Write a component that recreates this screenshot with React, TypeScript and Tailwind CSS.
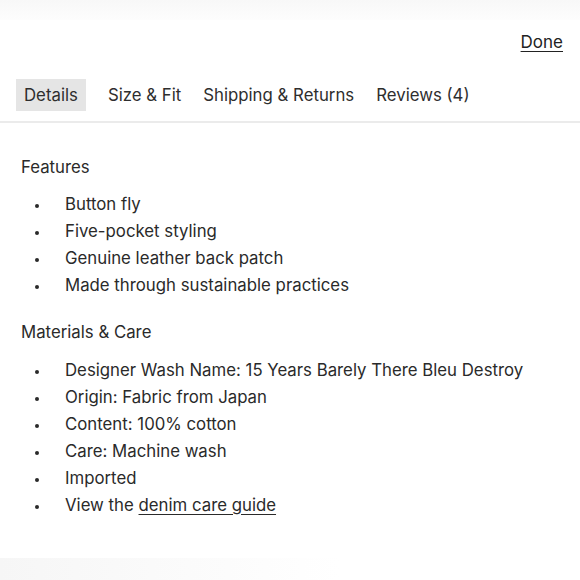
import React from "react";

const features = [
  "Button fly",
  "Five-pocket styling",
  "Genuine leather back patch",
  "Made through sustainable practices",
];

const materials = [
  "Designer Wash Name: 15 Years Barely There Bleu Destroy",
  "Origin: Fabric from Japan",
  "Content: 100% cotton",
  "Care: Machine wash",
  "Imported",
];

function Bullet({ children }: { children: React.ReactNode }) {
  return (
    <li className="flex items-center leading-[27px]">
      <span className="ml-[14px] mt-[3px] h-[4px] w-[4px] shrink-0 rounded-full bg-[#2a2a2a]" />
      <span className="ml-[26px]">{children}</span>
    </li>
  );
}

export default function App() {
  const tabs = ["Details", "Size & Fit", "Shipping & Returns", "Reviews (4)"];

  return (
    <main
      className="relative h-[580px] w-[580px] overflow-hidden bg-white text-[#2a2a2a]"
      style={{ fontFamily: "Inter, 'Noto Sans', sans-serif" }}
    >
      {/* top sheet edge */}
      <div className="h-[20px] bg-gradient-to-b from-[#f8f8f8] to-[#fdfdfd]" />

      {/* Done */}
      <div className="flex justify-end pr-[17px] pt-[11px]">
        <button className="text-[17px] leading-[22px] underline underline-offset-[3px] text-[#222]">
          Done
        </button>
      </div>

      {/* Tabs */}
      <div className="mt-[26px] flex items-center gap-[22px] pl-[16px] text-[16.8px] text-[#2e2e2e]">
        {tabs.map((t, i) => (
          <button
            key={t}
            className={
              i === 0
                ? "h-[32px] bg-[#e5e5e5] px-[8px] leading-[32px]"
                : "h-[32px] leading-[32px]"
            }
          >
            {t}
          </button>
        ))}
      </div>
      <div className="mt-[10px] h-[2px] bg-[#ebebeb]" />

      {/* Content */}
      <div className="pl-[21px] pt-[31px] text-[16.8px]">
        <h3 className="leading-[27px]">Features</h3>
        <ul className="mt-[10px]">
          {features.map((f) => (
            <Bullet key={f}>{f}</Bullet>
          ))}
        </ul>

        <h3 className="mt-[20px] leading-[27px]">Materials &amp; Care</h3>
        <ul className="mt-[11px]">
          {materials.map((m) => (
            <Bullet key={m}>{m}</Bullet>
          ))}
          <Bullet>
            View the{" "}
            <a href="#" className="underline underline-offset-[3px]">
              denim care guide
            </a>
          </Bullet>
        </ul>
      </div>

      {/* bottom sheet edge */}
      <div className="absolute bottom-0 left-0 h-[22px] w-[340px] bg-gradient-to-r from-[#f6f6f6] to-white" />
    </main>
  );
}
